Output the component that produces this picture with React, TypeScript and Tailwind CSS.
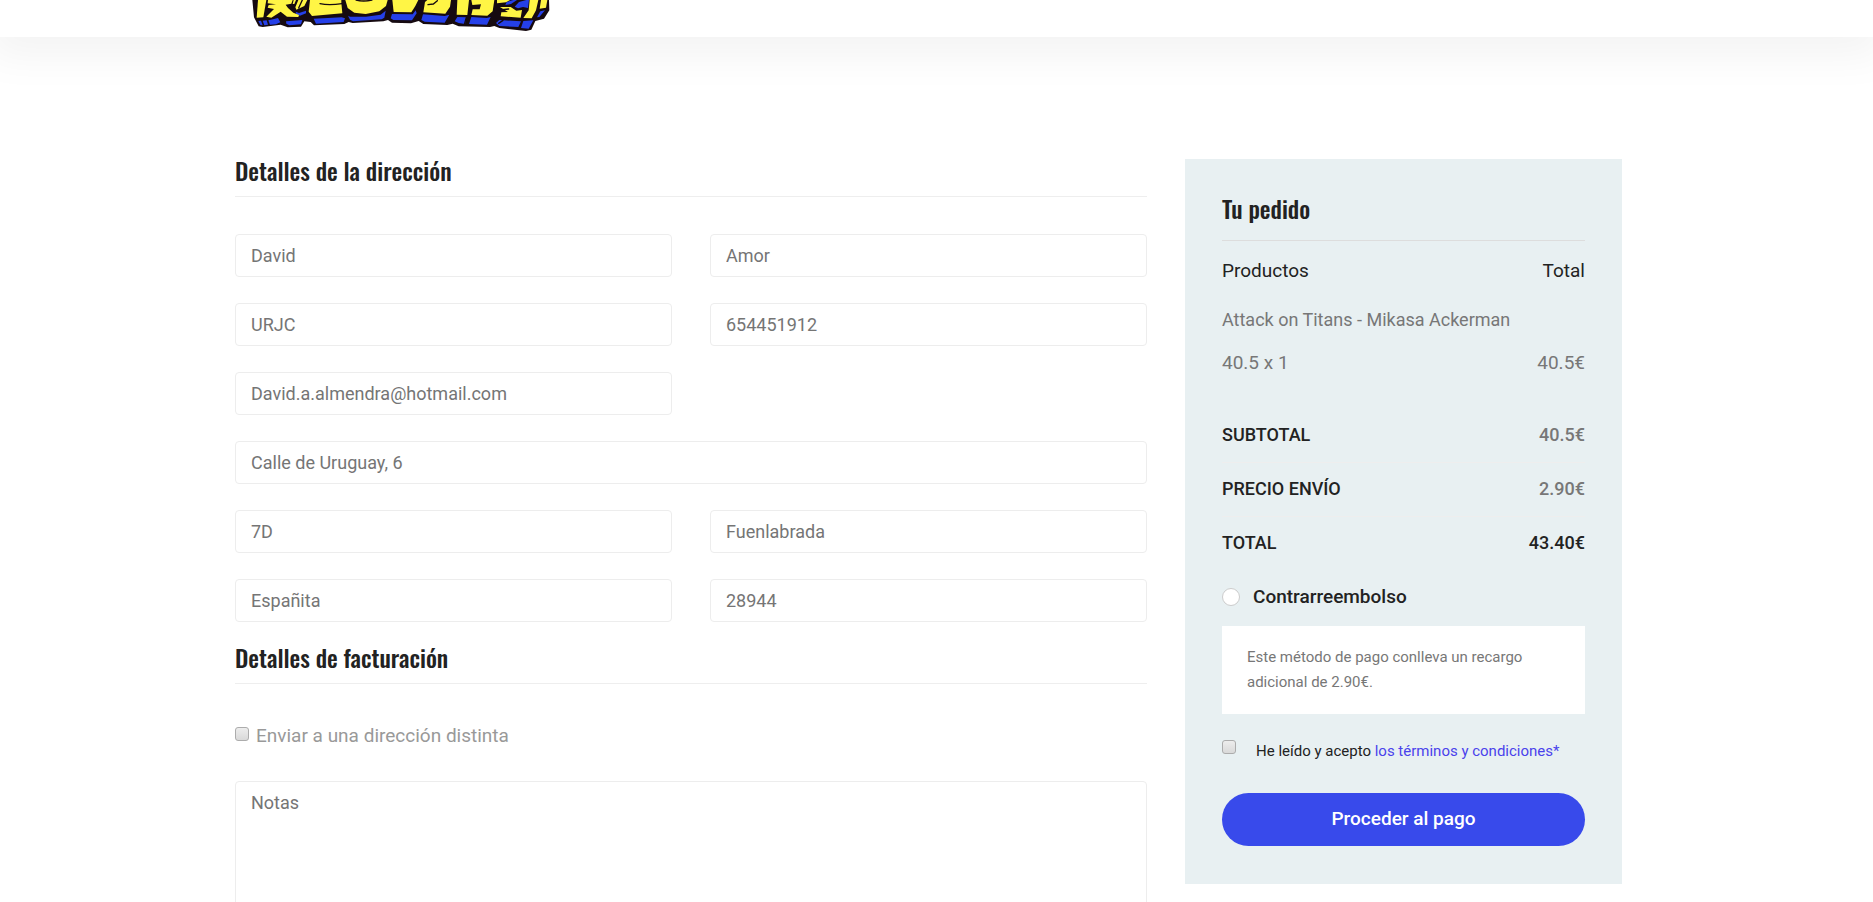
import React from "react";

const headingStyle =
  "border-b font-['Oswald','Liberation_Sans_Narrow',sans-serif] text-[24px] leading-[22px] font-medium text-[#222222]";

const fieldStyle =
  "block w-full rounded border border-[#ededed] bg-white px-[15px] text-[18px] text-[#757575] outline-none focus:border-[#384aeb]";

const tickStyle =
  "h-[14px] w-[14px] shrink-0 appearance-none rounded-[3px] border border-[#acacac] bg-linear-to-b from-[#ededed] to-[#d9d9d9] checked:from-[#384aeb] checked:to-[#384aeb]";

function Logo() {
  return (
    <svg viewBox="0 0 900 96" className="h-8 w-[300px]" role="img" aria-label="Logo">
      <path
        fill="#160a10"
        d="M7 0 12 52 26 79 38 81 92 74 113 82 153 80 163 64 182 66 192 76 283 72 296 66 308 69 400 64 414 60 426 68 483 70 506 63 520 72 592 75 608 71 626 79 720 81 733 78 748 84 828 93 844 89 856 63 882 56 898 31 897 0Z"
      />
      <g fill="#2540e8">
        <path d="M25 63 33 62 38 76 31 75ZM38 62 50 61 54 74 43 76ZM55 61 72 57 84 54 91 67 78 73 60 74Z" />
        <path d="M108 64 148 61 157 60 153 73 118 76 109 71ZM137 35 147 39 168 32 168 40 150 47 139 43Z" />
        <path d="M191 56 275 52 285 55 281 66 198 71Z" />
        <path d="M294 47 300 50 348 50 392 44 407 32 403 53 395 58 309 64 300 59Z" />
        <path d="M426 42 488 43 497 31 500 40 486 61 430 60 422 55Z" />
        <path d="M519 43 584 48 598 44 584 68 524 65 514 60Z" />
        <path d="M622 51 649 52 645 72 626 69 614 64ZM664 51 710 54 722 51 711 74 657 72Z" />
        <path d="M748 60 813 64 805 81 748 78 738 69ZM820 63 850 61 836 86 813 84Z" />
        <path d="M807 6 829 0 837 0 834 24 819 21 804 25 794 20ZM770 6 790 0 801 0 783 12 766 15ZM871 34 885 31 868 51 861 52Z" />
      </g>
      <g fill="#fff545">
        <path d="M24 0 49 0 40 52 20 53Z" />
        <path d="M54 0 128 0 124 11 107 14 114 24 130 38 147 45 145 51 111 50 92 35 64 53 49 50 72 27 53 23 56 15 78 13 53 10Z" />
        <path d="M131 0 138 0 133 12 128 12ZM145 0 172 0 163 18 139 29 136 22Z" />
        <path d="M180 0 274 0 274 8 277 40 186 48 176 35Z" />
        <path d="M286 0 413 0 408 18 388 34 347 42 313 38 293 24Z" />
        <path d="M427 0 505 0 496 18 484 37 431 36Z" />
        <path d="M525 6 532 0 603 0 600 20 586 41 520 37Z" />
        <path d="M622 0 657 0 652 45 620 44ZM664 0 733 0 728 34 712 47 664 45 668 28 689 28 693 13 667 15Z" />
        <path d="M741 0 780 0 768 7 741 10ZM750 21 782 21 799 32 816 30 812 53 752 49 754 37 774 36ZM839 0 865 0 858 31 845 55 820 54 836 31Z" />
        <path d="M873 0 892 0 888 23 869 26Z" />
      </g>
      <g stroke="#160a10" strokeWidth="4" fill="none" strokeLinecap="round">
        <path d="M157 0 146 24M210 11Q236 17 276 11M318 0Q340 6 366 0M534 14 550 12 562 2M750 30 776 27M759 61 746 70M649 52 643 73" />
      </g>
    </svg>
  );
}

type FieldProps = { label: string; value: string; type?: string; span?: string };

function Field({ label, value, type = "text", span = "" }: FieldProps) {
  return (
    <div className={span}>
      <input type={type} aria-label={label} defaultValue={value} className={`${fieldStyle} h-[43px]`} />
    </div>
  );
}

function AddressForm() {
  return (
    <form className="col-span-2">
      <h3 className={`${headingStyle} border-[#eeeeee] pb-[15px]`}>Detalles de la dirección</h3>
      <div className="mt-[37px] grid grid-cols-2 gap-x-[38px] gap-y-[26px]">
        <Field label="Nombre" value="David" />
        <Field label="Apellidos" value="Amor" />
        <Field label="Empresa" value="URJC" />
        <Field label="Teléfono" value="654451912" type="tel" />
        <Field label="Correo" value="David.a.almendra@hotmail.com" type="email" />
        <Field label="Dirección" value="Calle de Uruguay, 6" span="col-span-2" />
        <Field label="Piso" value="7D" />
        <Field label="Ciudad" value="Fuenlabrada" />
        <Field label="País" value="Españita" />
        <Field label="Código postal" value="28944" />
      </div>
      <h3 className={`${headingStyle} mt-6 border-[#eeeeee] pb-[15px]`}>
        Detalles de facturación
      </h3>
      <div className="mt-9 flex items-start gap-[7px]">
        <input id="otra-direccion" type="checkbox" className={`${tickStyle} mt-[7px]`} />
        <label htmlFor="otra-direccion" className="text-[19px] leading-8 text-[#999999]">
          Enviar a una dirección distinta
        </label>
      </div>
      <textarea
        rows={6}
        aria-label="Notas del pedido"
        placeholder="Notas"
        className={`${fieldStyle} mt-[29px] resize-none py-2 leading-[26px] placeholder:text-[#757575]`}
      />
    </form>
  );
}

const totals = [
  { name: "SUBTOTAL", amount: "40.5€", tone: "text-[#777777]" },
  { name: "PRECIO ENVÍO", amount: "2.90€", tone: "text-[#777777]" },
  { name: "TOTAL", amount: "43.40€", tone: "text-[#222222]" },
];

function OrderSummary() {
  return (
    <aside className="self-start bg-[#e8f0f2] px-[37px] py-[38px]">
      <h3 className={`${headingStyle} border-[#dddddd] pb-[21px]`}>Tu pedido</h3>
      <table className="mt-[13px] w-full text-[19px] leading-[22px] text-[#777777]">
        <thead>
          <tr className="text-[#222222]">
            <th className="h-[34px] p-0 text-left font-normal">Productos</th>
            <th className="h-[34px] p-0 text-right font-normal">Total</th>
          </tr>
        </thead>
        <tbody>
          <tr>
            <td colSpan={2} className="h-16 p-0 text-[18px]">
              Attack on Titans - Mikasa Ackerman
            </td>
          </tr>
          <tr>
            <td className="h-[22px] p-0">40.5 x 1</td>
            <td className="h-[22px] p-0 text-right">40.5€</td>
          </tr>
        </tbody>
      </table>
      <table className="mt-[34px] w-full text-[18px] leading-[22px] font-medium">
        <tbody>
          {totals.map(({ name, amount, tone }) => (
            <tr key={name} className="border-b border-[#eeeeee] last:border-0">
              <th scope="row" className="h-[54px] p-0 text-left font-medium text-[#222222]">
                {name}
              </th>
              <td className={`h-[54px] p-0 text-right ${tone}`}>{amount}</td>
            </tr>
          ))}
        </tbody>
      </table>
      <div className="mt-[11px] flex items-center gap-[13px]">
        <input
          id="contrarreembolso"
          type="radio"
          name="pago"
          className="h-[18px] w-[18px] appearance-none rounded-full border border-[#cccccc] bg-white checked:border-[5px] checked:border-[#384aeb]"
        />
        <label htmlFor="contrarreembolso" className="text-[19px] leading-8 font-medium text-[#222222]">
          Contrarreembolso
        </label>
      </div>
      <p className="mt-[13px] bg-white px-[25px] py-[19px] text-[15px] leading-[25px] text-[#777777]">
        Este método de pago conlleva un recargo adicional de 2.90€.
      </p>
      <div className="mt-6 flex items-start gap-5">
        <input id="terminos" type="checkbox" className={`${tickStyle} mt-0.5`} />
        <p className="text-[15px] leading-[26px] text-[#222222]">
          <label htmlFor="terminos">He leído y acepto</label>{" "}
          <a href="#terminos" className="text-[#4a42ec]">
            los términos y condiciones*
          </a>
        </p>
      </div>
      <button
        type="button"
        className="mt-[29px] h-[53px] w-full cursor-pointer rounded-full bg-[#384aeb] text-[19px] font-medium text-white"
      >
        Proceder al pago
      </button>
    </aside>
  );
}

export default function App() {
  return (
    <div className="h-screen overflow-hidden bg-white pr-4 font-['Roboto',sans-serif]">
      <header className="-mr-4 h-[37px] bg-white pr-4 shadow-[0_6px_44px_12px_rgba(0,0,0,0.05)]">
        <div className="mx-auto max-w-[1387px] pl-[15px]">
          <Logo />
        </div>
      </header>
      <main className="mx-auto mt-[122px] grid max-w-[1387px] grid-cols-3 gap-[38px]">
        <AddressForm />
        <OrderSummary />
      </main>
    </div>
  );
}
